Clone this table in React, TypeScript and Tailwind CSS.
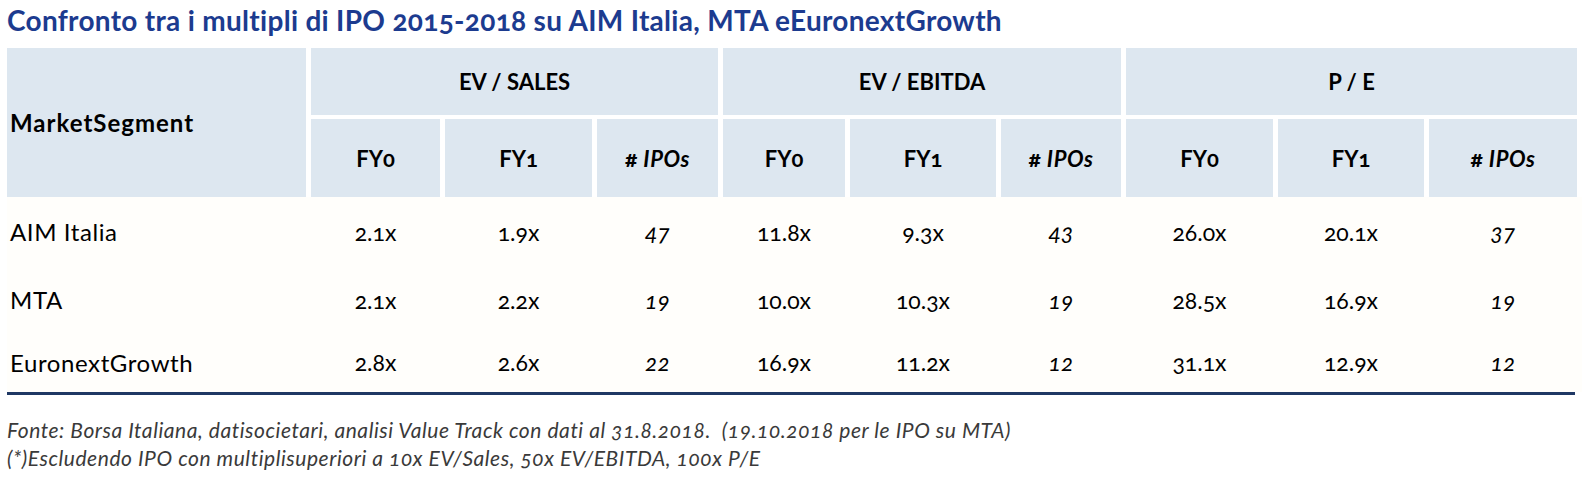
import React from "react";

const cols = "grid-cols-[299px_129px_147px_121px_122px_146px_120px_147px_146px_148px]";

const rows = [
  { name: "AIM Italia", v: ["2.1x", "1.9x", "47", "11.8x", "9.3x", "43", "26.0x", "20.1x", "37"], h: "h-[70px]" },
  { name: "MTA", v: ["2.1x", "2.2x", "19", "10.0x", "10.3x", "19", "28.5x", "16.9x", "19"], h: "h-[66px]" },
  { name: "EuronextGrowth", v: ["2.8x", "2.6x", "22", "16.9x", "11.2x", "12", "31.1x", "12.9x", "12"], h: "h-[59px]" },
];

export default function App() {
  return (
    <div className="w-[1589px] h-[494px] bg-white font-['Lato',sans-serif] oldstyle-nums text-black">
      <div className="pl-[7px] pt-[5px] h-[35px]">
        <h1 className="text-[28px] leading-[30px] font-bold tracking-[0.3px] text-[#1c3b8f] whitespace-nowrap">
          Confronto tra i multipli di IPO 2015-2018 su AIM Italia, MTA eEuronextGrowth
        </h1>
      </div>
      <div className="pl-[7px] mt-[13px] w-[1582px]">
        <div className={`grid ${cols} grid-rows-[67px_78px] gap-x-[5px] gap-y-[4px]`}>
          <div className="row-span-2 bg-[#dde7f0] flex items-center pl-[3px] text-[24px] tracking-[1px] font-bold">MarketSegment</div>
          <div className="col-span-3 bg-[#dde7f0] flex items-center justify-center text-[22px] font-bold">EV / SALES</div>
          <div className="col-span-3 bg-[#dde7f0] flex items-center justify-center text-[22px] font-bold">EV / EBITDA</div>
          <div className="col-span-3 bg-[#dde7f0] flex items-center justify-center text-[22px] font-bold">P / E</div>
          {[0, 1, 2].map((g) => (
            <React.Fragment key={g}>
              <div className="bg-[#dde7f0] flex items-center justify-center text-[22px] font-bold">FY0</div>
              <div className="bg-[#dde7f0] flex items-center justify-center text-[22px] font-bold">FY1</div>
              <div className="bg-[#dde7f0] flex items-center justify-center text-[22px] font-bold">
                <span className="text-[23px]">#</span>
                <span className="italic ml-[6px] tracking-[0.6px]">IPOs</span>
              </div>
            </React.Fragment>
          ))}
        </div>
        <div className="bg-[#fffefb]">
          {rows.map((r) => (
            <div key={r.name} className={`grid ${cols} gap-x-[5px] ${r.h} items-center text-[23px]`}>
              <div className="pl-[3px] text-[24px] tracking-[0.6px]">{r.name}</div>
              {r.v.map((v, i) => (
                <div key={i} className={`text-center ${i % 3 === 2 ? "italic" : ""}`}>{v}</div>
              ))}
            </div>
          ))}
        </div>
        <div className="h-[3px] bg-[#1f3864] w-[1568px]" />
      </div>
      <div className="pl-[7px] pt-[21px] text-[21px] leading-[28px] tracking-[0.55px] italic text-[#3a3a3a] whitespace-nowrap">
        <div>Fonte: Borsa Italiana, datisocietari, analisi Value Track con dati al 31.8.2018.&nbsp; (19.10.2018 per le IPO su MTA)</div>
        <div>(*)Escludendo IPO con multiplisuperiori a 10x EV/Sales, 50x EV/EBITDA, 100x P/E</div>
      </div>
    </div>
  );
}
